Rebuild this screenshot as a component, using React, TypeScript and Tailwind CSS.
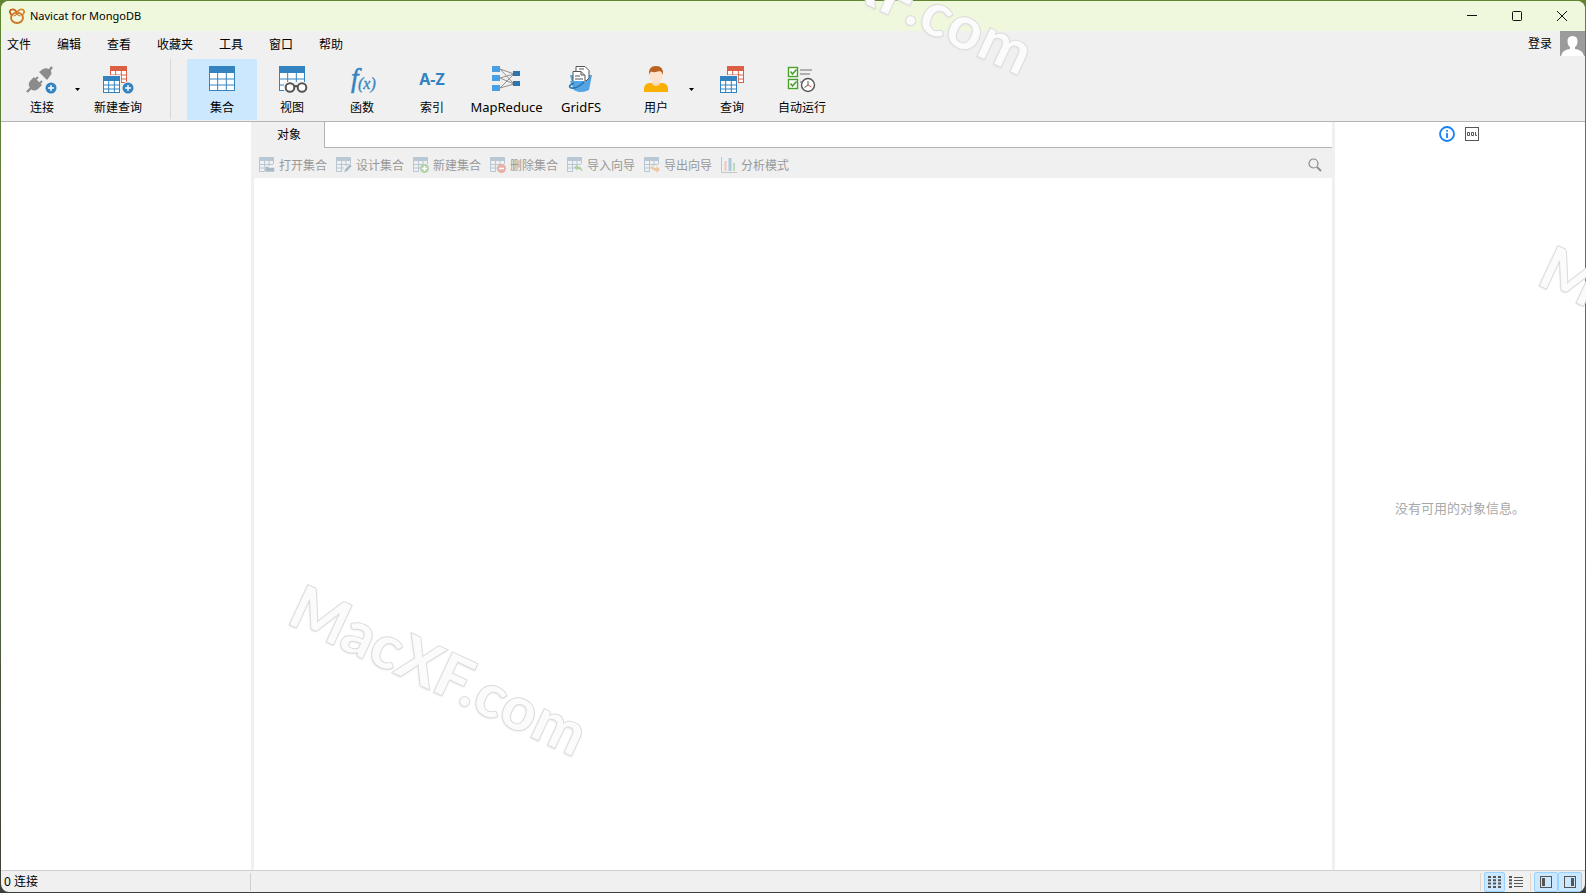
import type { ReactNode } from "react";

const BLUE = "#3383c0";

function TableShape({ x = 0, y = 0, w = 26, h = 25, color = BLUE }) {
  const head = Math.round(h * 0.28);
  const rowH = (h - head) / 3;
  const colW = w / 3;
  return (
    <g transform={`translate(${x} ${y})`}>
      <rect x=".5" y=".5" width={w - 1} height={h - 1} fill="#fff" stroke={color} />
      <rect width={w} height={head} fill={color} />
      <path
        d={`M0 ${head + rowH}H${w}M0 ${head + rowH * 2}H${w}M${colW} ${head}V${h}M${colW * 2} ${head}V${h}`}
        stroke={color}
        fill="none"
      />
    </g>
  );
}

function PlusBadge({ x, y }: { x: number; y: number }) {
  return (
    <g transform={`translate(${x} ${y})`}>
      <circle r="6.5" fill="#f0f0f0" />
      <circle r="5.5" fill={BLUE} />
      <path d="M-3 0H3M0-3V3" stroke="#fff" strokeWidth="1.4" />
    </g>
  );
}

function Icon({ children }: { children: ReactNode }) {
  return (
    <svg width="32" height="28" viewBox="0 0 32 28" fill="none" className="overflow-visible" aria-hidden="true">
      {children}
    </svg>
  );
}

const icons = {
  connect: (
    <Icon>
      <g transform="translate(1 1)" fill="#8b8b8b" stroke="#8b8b8b">
        <path d="M0 25 5 20" strokeWidth="2.4" />
        <path d="M3 14 7 10 15 18 11 22Q7 25 4 22 0 18 3 14Z" stroke="none" />
        <path d="M8 13 11 10M12 17 15 14" strokeWidth="2" />
        <path d="M25 0 21 5" strokeWidth="2.4" />
        <path d="M12 5 16 2Q20 0 23 3 26 6 23 9L20 13Z" stroke="none" />
      </g>
      <PlusBadge x={25} y={22} />
    </Icon>
  ),
  newQuery: (
    <Icon>
      <TableShape x={8} y={0} w={17} h={17} color="#dd5f43" />
      <rect y="9" x="0" width="19" height="19" fill="#f0f0f0" />
      <TableShape x={1} y={10} w={17} h={17} />
      <PlusBadge x={26} y={22} />
    </Icon>
  ),
  collection: (
    <Icon>
      <TableShape x={3} y={0} />
    </Icon>
  ),
  view: (
    <Icon>
      <TableShape x={3} y={0} />
      <rect x="8" y="16" width="24" height="12" fill="#f0f0f0" />
      <g stroke="#555" strokeWidth="2">
        <circle cx="14" cy="21.500" r="4.300" fill="#fff" />
        <circle cx="26" cy="21.500" r="4.300" fill="#fff" />
        <path d="M18 21q2-2 4 0" />
      </g>
    </Icon>
  ),
  fn: (
    <Icon>
      <text x="5" y="21" fontFamily="Liberation Serif, serif" fontStyle="italic" fontSize="27" fill={BLUE} stroke={BLUE} strokeWidth=".5">
        f
      </text>
      <text x="12" y="23" fontFamily="Liberation Serif, serif" fontStyle="italic" fontSize="16" fill={BLUE} stroke={BLUE} strokeWidth=".3">
        (x)
      </text>
    </Icon>
  ),
  index: (
    <Icon>
      <text x="16" y="19" textAnchor="middle" fontFamily="Noto Sans, sans-serif" fontWeight="700" fontSize="16" fill={BLUE}>
        A-Z
      </text>
    </Icon>
  ),
  mapReduce: (
    <Icon>
      <path d="M9 3 23 8M9 3 23 18M9 12 23 8M9 12 23 18M9 22 23 8M9 22 23 18" stroke="#909090" />
      <g fill="#4a9fe2">
        <rect x="1" y="0" width="8" height="6" />
        <rect x="1" y="9" width="8" height="6" />
        <rect x="1" y="19" width="8" height="6" />
      </g>
      <g fill="#2d75ac">
        <rect x="22" y="5" width="7" height="5" />
        <rect x="22" y="15" width="7" height="5" />
      </g>
    </Icon>
  ),
  gridFs: (
    <Icon>
      <path d="M5 9 9 24Q16 28 24 24L27 9Z" fill="#53a5e3" />
      <path d="M11 .5h9l4 4V12l-3 3H11Z" fill="#fff" stroke="#555" />
      <path d="M8 5.500h8l4 4V16H8Z" fill="#fff" stroke="#555" />
      <path d="M16 5.500V9h4M10 10h5M10 13h8M14 3h5" stroke="#555" />
      <path d="M5 15H24L23 23Q16 28 9 24Z" fill="#53a5e3" />
      <path d="M19 16Q12 23 6 22 2 20 9 17" stroke="#2872ad" strokeWidth="1.500" />
    </Icon>
  ),
  user: (
    <Icon>
      <path d="M4 26V23Q4 18 9 17H23Q28 18 28 23V26Z" fill="#f9b000" />
      <path d="M12 14H20V18Q16 22 12 18Z" fill="#f8d7bb" />
      <ellipse cx="16" cy="9" rx="6.500" ry="8" fill="#fde3cc" />
      <path d="M9 9Q8 0 16 0T23 9Q22 6 20 5 14 7 11 5.500 9.500 7 9 9Z" fill="#b96422" />
    </Icon>
  ),
  query: (
    <Icon>
      <TableShape x={11} y={0} w={17} h={17} color="#dd5f43" />
      <rect x="3" y="9" width="19" height="19" fill="#f0f0f0" />
      <TableShape x={4} y={10} w={17} h={17} />
    </Icon>
  ),
  automation: (
    <Icon>
      <rect x="2.500" y="1.500" width="9" height="9" fill="#fff" stroke="#4aa02c" strokeWidth="1.400" />
      <rect x="2.500" y="13.500" width="9" height="9" fill="#fff" stroke="#4aa02c" strokeWidth="1.400" />
      <path d="M4.500 5.500 6.500 8 10.500 3.500M4.500 17.500 6.500 20 10.500 15.500" stroke="#4aa02c" strokeWidth="1.600" />
      <path d="M14 4H26M14 8H24M14 16H17" stroke="#999" strokeWidth="1.600" />
      <circle cx="22" cy="19" r="6.500" fill="#fff" stroke="#555" strokeWidth="1.400" />
      <path d="M22 15V19M22 19 18.500 21.500" stroke="#555" />
      <path d="M22 19 25.500 21" stroke="#e0543a" />
    </Icon>
  ),
};

function ToolButton({ label, icon, active }: { label: string; icon: ReactNode; active?: boolean }) {
  const latin = /^[A-Za-z]+$/.test(label);
  return (
    <button
      type="button"
      className={`flex h-[61px] min-w-16 flex-col items-center px-1 pt-[7px] ${active ? "bg-[#cce8ff]" : ""}`}
    >
      {icon}
      <span className={`mt-[5px] whitespace-nowrap ${latin ? "text-[13px] leading-4" : "text-[12px] leading-[18px]"}`}>
        {label}
      </span>
    </button>
  );
}

function SplitButton({ label, icon }: { label: string; icon: ReactNode }) {
  return (
    <div className="mr-0.5 ml-2 flex">
      <ToolButton label={label} icon={icon} />
      <button type="button" aria-label={`${label}菜单`} className="flex w-[7px] items-center justify-center">
        <svg width="5" height="3" viewBox="0 0 5 3" aria-hidden="true">
          <path d="M0 0H5L2.500 3Z" fill="#000" />
        </svg>
      </button>
    </div>
  );
}

const smallBadges: Record<string, ReactNode> = {
  open: <path d="M6 9.500h3l1 1h5.500V15H6Z" fill="#a9bac7" stroke="#f0f0f0" strokeWidth=".6" />,
  design: <path d="M8 15.500 9 12 14 7 16 9 11 14.500Z" fill="#a9bac7" stroke="#f0f0f0" strokeWidth=".5" />,
  add: (
    <g>
      <circle cx="11.500" cy="11.500" r="4.500" fill="#b5d3a8" />
      <path d="M9 11.500h5M11.500 9v5" stroke="#fff" strokeWidth="1.500" />
    </g>
  ),
  remove: (
    <g>
      <circle cx="11.500" cy="11.500" r="4.500" fill="#e6b0a8" />
      <path d="M9 11.500h5" stroke="#fff" strokeWidth="1.500" />
    </g>
  ),
  importing: <path d="M7 10.500 10.500 7.500V9.500Q15.500 9.500 15.500 15 14 12 10.500 12V13.500Z" fill="#adcd9e" />,
  exporting: <path d="M16 12.500 12.500 9V11Q8 11 8 7 6 14 12.500 14V16Z" fill="#ecc6a0" />,
};

function SmallIcon({ kind }: { kind: string }) {
  return (
    <svg width="16" height="16" viewBox="0 0 16 16" fill="none" aria-hidden="true">
      {kind === "analyze" ? (
        <>
          <path d="M.5 0V15.500H16" stroke="#c0c5c9" />
          <path d="M4.500 4V14" stroke="#ecc6bb" strokeWidth="2" />
          <path d="M9 1V14" stroke="#a9c9df" strokeWidth="3" />
          <path d="M13 6V14" stroke="#b9dbc0" strokeWidth="2" />
        </>
      ) : (
        <>
          <path d="M.5 .5H14.500V7M.5 .5V14.500H6" stroke="#b7c7d3" />
          <path d="M1 1H14V4H1Z" fill="#b7c7d3" />
          <path d="M1 7.500H14M1 11H8M5.500 4V14M10 4V9" stroke="#b7c7d3" />
          {smallBadges[kind]}
        </>
      )}
    </svg>
  );
}

const menus = ["文件", "编辑", "查看", "收藏夹", "工具", "窗口", "帮助"];

const objectActions = [
  { kind: "open", label: "打开集合" },
  { kind: "design", label: "设计集合" },
  { kind: "add", label: "新建集合" },
  { kind: "remove", label: "删除集合" },
  { kind: "importing", label: "导入向导" },
  { kind: "exporting", label: "导出向导" },
  { kind: "analyze", label: "分析模式" },
];

function Watermark({ className }: { className: string }) {
  return (
    <span
      aria-hidden="true"
      className={`pointer-events-none absolute origin-bottom-left rotate-[25deg] font-['Lato'] text-[61px] leading-[60px] font-black whitespace-nowrap text-white/85 [-webkit-text-stroke:1px_#dcdcdc] [text-shadow:0_1px_2px_#e2e2e2] ${className}`}
    >
      MacXF.com
    </span>
  );
}

function TitleBar() {
  return (
    <header className="flex h-[30px] shrink-0 items-center bg-[#eff8dc] pr-px pl-2">
      <svg width="16" height="16" viewBox="0 0 16 16" fill="none" stroke="#cf7420" strokeWidth="1.800" aria-hidden="true">
        <ellipse cx="8" cy="9.800" rx="6" ry="5.200" />
        <path d="M2.500 7Q-.5 3.500 2 1.800 6 0 8 5" stroke="#c0611a" />
        <path d="M13.500 7Q16.500 3.500 14 1.800 10 0 8 5" stroke="#e0882c" />
        <path d="M4.500 8Q7.500 7.500 8 5 8.500 7.500 11.500 8" strokeWidth="1.200" />
      </svg>
      <h1 className="ml-[5px] text-[11px]">Navicat for MongoDB</h1>
      <div className="ml-auto flex h-full">
        <button type="button" aria-label="最小化" className="flex w-[45px] items-center justify-center">
          <svg width="10" height="10" viewBox="0 0 10 10" stroke="#111" aria-hidden="true">
            <path d="M0 4.500H10" />
          </svg>
        </button>
        <button type="button" aria-label="最大化" className="flex w-[45px] items-center justify-center">
          <svg width="10" height="10" viewBox="0 0 10 10" fill="none" stroke="#111" aria-hidden="true">
            <rect x=".5" y=".5" width="9" height="9" rx="1" />
          </svg>
        </button>
        <button type="button" aria-label="关闭" className="flex w-[45px] items-center justify-center">
          <svg width="10" height="10" viewBox="0 0 10 10" stroke="#111" aria-hidden="true">
            <path d="M0 0 10 10M10 0 0 10" />
          </svg>
        </button>
      </div>
    </header>
  );
}

export default function App() {
  return (
    <div className="relative flex h-screen overflow-hidden bg-linear-to-b from-[#5f8530] via-[#5c7040] to-[#3a4038] p-px font-['Noto_Sans','Noto_Sans_CJK_SC',sans-serif] text-[12px] text-black">
      <div className="flex min-w-0 flex-1 flex-col overflow-hidden rounded-lg bg-[#f0f0f0]">
        <TitleBar />

        <div className="flex h-[27px] shrink-0">
          <nav className="flex items-center gap-[26px] pl-1.5">
            {menus.map((menu) => (
              <button key={menu} type="button">
                {menu}
              </button>
            ))}
          </nav>
          <div className="ml-auto flex items-start gap-2">
            <a href="#login" className="leading-[25px]">
              登录
            </a>
            <svg width="25" height="25" viewBox="0 0 25 25" aria-hidden="true">
              <rect width="25" height="25" fill="#9b9b9b" />
              <path d="M12.500 5Q18 5 17.500 11 17 15 15 16V18Q23 19 24 25H1Q2 19 10 18V16Q8 15 7.500 11 7 5 12.500 5Z" fill="#fff" />
            </svg>
          </div>
        </div>

        <div role="toolbar" className="flex h-[64px] shrink-0 items-start border-b border-[#b4b4b4] pt-px pl-px">
          <SplitButton label="连接" icon={icons.connect} />
          <div className="grid w-[70px]">
            <ToolButton label="新建查询" icon={icons.newQuery} />
          </div>
          <div className="mr-4 ml-[17px] h-[60px] w-px bg-[#d9d9d9]" />
          <div className="grid auto-cols-[70px] grid-flow-col">
            <ToolButton label="集合" icon={icons.collection} active />
            <ToolButton label="视图" icon={icons.view} />
            <ToolButton label="函数" icon={icons.fn} />
            <ToolButton label="索引" icon={icons.index} />
          </div>
          <div className="grid w-[79px]">
            <ToolButton label="MapReduce" icon={icons.mapReduce} />
          </div>
          <div className="grid w-[70px]">
            <ToolButton label="GridFS" icon={icons.gridFs} />
          </div>
          <SplitButton label="用户" icon={icons.user} />
          <div className="grid auto-cols-[70px] grid-flow-col">
            <ToolButton label="查询" icon={icons.query} />
            <ToolButton label="自动运行" icon={icons.automation} />
          </div>
        </div>

        <div className="flex min-h-0 flex-1">
          <aside className="w-[250px] shrink-0 bg-white" />

          <main className="flex min-w-0 flex-1 flex-col border-x-[3px] border-[#f0f0f0] bg-white">
            <div role="tablist" className="flex h-[26px] shrink-0">
              <button type="button" role="tab" aria-selected="true" className="w-[71px] border-r border-[#b4b4b4] bg-[#f0f0f0]">
                对象
              </button>
              <div className="flex-1 border-b border-[#b4b4b4]" />
            </div>
            <div role="toolbar" className="flex h-[30px] shrink-0 items-center gap-[9px] bg-[#f0f0f0] px-[5px] pt-1">
              {objectActions.map((action) => (
                <button key={action.kind} type="button" disabled className="flex items-center gap-1 text-[#999]">
                  <SmallIcon kind={action.kind} />
                  <span className="pt-0.5">{action.label}</span>
                </button>
              ))}
              <button type="button" aria-label="搜索" className="mr-[5px] ml-auto">
                <svg width="14" height="14" viewBox="0 0 14 14" fill="none" stroke="#8a8a8a" aria-hidden="true">
                  <circle cx="5.500" cy="5.500" r="4.500" strokeWidth="1.200" />
                  <path d="M9 9 13 13" strokeWidth="1.800" />
                </svg>
              </button>
            </div>
          </main>

          <aside className="flex w-[250px] shrink-0 flex-col bg-white">
            <div className="flex h-[26px] items-center justify-center gap-2.5 pr-0.5 pb-0.5">
              <button type="button" aria-label="信息">
                <svg width="16" height="16" viewBox="0 0 16 16" fill="none" stroke="#1681f5" aria-hidden="true">
                  <circle cx="8" cy="8" r="7" strokeWidth="1.800" />
                  <path d="M8 7V12M8 4V5.800" strokeWidth="1.800" />
                </svg>
              </button>
              <button type="button" aria-label="DDL">
                <svg width="14" height="14" viewBox="0 0 14 14" fill="none" stroke="#555" aria-hidden="true">
                  <rect x=".5" y=".5" width="13" height="13" />
                  <path d="M2.500 5.500H4.500V8.500H2.500ZM6.500 5.500H8.500V8.500H6.500ZM10.500 5V8.500H12" />
                </svg>
              </button>
            </div>
            <p className="flex flex-1 items-center justify-center text-[13px] text-[#a8a8a8]">没有可用的对象信息。</p>
          </aside>
        </div>

        <footer className="flex h-[22px] shrink-0 items-center border-t border-[#d0d0d0]">
          <div className="flex h-[18px] w-[250px] items-center border-r border-[#d0d0d0] pl-[3px]">0 连接</div>
          <div className="ml-auto flex h-full items-center pr-[3px]">
            <div className="mr-[3px] h-[18px] w-px bg-[#e0d6cc]" />
            <button type="button" aria-label="详细信息" className="flex h-5 w-[21px] items-center justify-center rounded-xs border border-[#99d1ff] bg-[#cce8ff]">
              <svg width="13" height="12" viewBox="0 0 13 12" stroke="#555" strokeWidth="2" strokeDasharray="3 2" aria-hidden="true">
                <path d="M0 1H13M0 4.300H13M0 7.600H13M0 11H13" />
              </svg>
            </button>
            <button type="button" aria-label="列表" className="flex h-5 w-[21px] items-center justify-center">
              <svg width="14" height="12" viewBox="0 0 14 12" stroke="#555" aria-hidden="true">
                <path d="M0 1H3M0 4.300H3M0 7.600H3M0 11H3" strokeWidth="2" />
                <path d="M5 1.500H14M5 4.500H14M5 7.500H14M5 10.500H14" />
              </svg>
            </button>
            <div className="mr-[3px] ml-1 h-[18px] w-px bg-[#e0d6cc]" />
            <button type="button" aria-label="左侧面板" className="flex h-5 w-6 items-center justify-center rounded-xs border border-[#99d1ff] bg-[#cce8ff]">
              <svg width="12" height="12" viewBox="0 0 12 12" fill="none" stroke="#555" aria-hidden="true">
                <rect x=".5" y=".5" width="11" height="11" />
                <path d="M3.500 2V10" strokeWidth="3" />
              </svg>
            </button>
            <button type="button" aria-label="右侧面板" className="flex h-5 w-6 items-center justify-center rounded-xs border border-[#99d1ff] bg-[#cce8ff]">
              <svg width="12" height="12" viewBox="0 0 12 12" fill="none" stroke="#555" aria-hidden="true">
                <rect x=".5" y=".5" width="11" height="11" />
                <path d="M8.500 2V10" strokeWidth="3" />
              </svg>
            </button>
          </div>
        </footer>
      </div>

      <Watermark className="top-[569px] left-[282px]" />
      <Watermark className="top-[-112px] left-[728px]" />
      <Watermark className="top-[230px] left-[1532px]" />
    </div>
  );
}
